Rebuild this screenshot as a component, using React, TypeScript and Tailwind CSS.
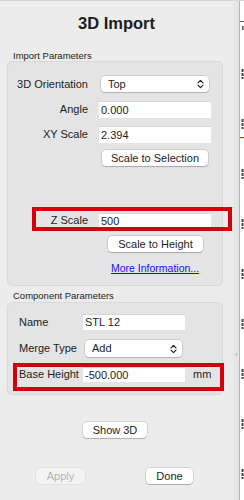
import React from "react";

function Chevrons() {
  return (
    <svg width="7" height="10" viewBox="0 0 7 10" fill="none" stroke="#222" strokeWidth="1.2" strokeLinecap="round" strokeLinejoin="round">
      <path d="M1 3.8 L3.5 1.3 L6 3.8" />
      <path d="M1 6.2 L3.5 8.7 L6 6.2" />
    </svg>
  );
}

function Select({ value, className }: { value: string; className: string }) {
  return (
    <div
      className={`flex items-center justify-between rounded-[4px] bg-white pl-[7px] pr-[5px] text-[11px] shadow-[0_0_0_0.5px_rgba(0,0,0,0.18),0_1px_1px_rgba(0,0,0,0.15)] ${className}`}
    >
      <span>{value}</span>
      <Chevrons />
    </div>
  );
}

function Field({ value, className }: { value: string; className: string }) {
  return (
    <div className={`flex items-center bg-white pl-[2px] text-[11px] border-t border-[#d6d6d6] ${className}`}>
      {value}
    </div>
  );
}

function Button({ label, className, disabled }: { label: string; className: string; disabled?: boolean }) {
  return (
    <div
      className={`flex items-center justify-center rounded-[4px] text-[11px] ${
        disabled
          ? "bg-[#f3f3f3] text-[#b3b3b3] shadow-[0_0_0_0.5px_rgba(0,0,0,0.1)]"
          : "bg-white text-[#1d1d1d] shadow-[0_0_0_0.5px_rgba(0,0,0,0.2),0_1px_1px_rgba(0,0,0,0.18)]"
      } ${className}`}
    >
      {label}
    </div>
  );
}

export default function App() {
  const ticks = [68, 118, 168, 218, 268, 318, 368, 418, 468];

  return (
    <div className="flex h-[500px] w-[244px] overflow-hidden bg-[#ececec] font-['Liberation_Sans',Arial,sans-serif] text-[#1d1d1d]">
      {/* Dialog panel */}
      <div className="flex w-[233px] flex-col border-t border-[#d6d6d6]">
        <div className="flex h-[45px] items-center justify-center text-[16.5px] font-bold">3D Import</div>

        <div className="mt-[5px] h-[10px] pl-[13px] text-[9.5px] leading-[10px]">Import Parameters</div>
        <div className="ml-[7px] flex h-[225px] w-[216px] flex-col rounded-[5px] border border-[#d9d9d9] bg-[#e4e4e4]">
          <div className="mt-[14px] flex h-[16px] items-center">
            <div className="w-[80px] text-right text-[11px]">3D Orientation</div>
            <Select value="Top" className="ml-[13px] h-[16px] w-[108px]" />
          </div>
          <div className="mt-[9px] flex h-[17px] items-center">
            <div className="w-[80px] text-right text-[11px]">Angle</div>
            <Field value="0.000" className="ml-[11px] h-[17px] w-[112px]" />
          </div>
          <div className="mt-[8px] flex h-[17px] items-center">
            <div className="w-[80px] text-right text-[11px]">XY Scale</div>
            <Field value="2.394" className="ml-[11px] h-[17px] w-[112px]" />
          </div>
          <Button label="Scale to Selection" className="ml-[94px] mt-[7px] h-[16px] w-[106px]" />

          <div className="relative mt-[47px] flex h-[15px] items-center">
            <div className="w-[80px] text-right text-[11px]">Z Scale</div>
            <Field value="500" className="ml-[11px] h-[15px] w-[112px]" />
            <div className="absolute left-[24px] top-[-6px] h-[24px] w-[200px] border-[4px] border-[#d6000d]" />
          </div>
          <Button label="Scale to Height" className="ml-[100px] mt-[8px] h-[16px] w-[95px]" />
          <div className="ml-[103px] mt-[10px] h-[12px] text-[10.5px] leading-[12px] text-[#1a0dff] underline">
            More Information...
          </div>
        </div>

        <div className="mt-[5px] h-[10px] pl-[13px] text-[9.5px] leading-[10px]">Component Parameters</div>
        <div className="ml-[7px] mt-[1px] flex h-[93px] w-[216px] flex-col rounded-[5px] border border-[#d9d9d9] bg-[#e4e4e4]">
          <div className="mt-[11px] flex h-[16px] items-center">
            <div className="w-[75px] pl-[11px] text-[11px]">Name</div>
            <Field value="STL 12" className="h-[16px] w-[102px]" />
          </div>
          <div className="mt-[10px] flex h-[17px] items-center">
            <div className="w-[77px] pl-[11px] text-[11px]">Merge Type</div>
            <Select value="Add" className="h-[17px] w-[97px]" />
          </div>
          <div className="relative mt-[10px] flex h-[15px] items-center">
            <div className="w-[75px] pl-[11px] text-[11px]">Base Height</div>
            <Field value="-500.000" className="h-[15px] w-[102px]" />
            <div className="ml-[8px] text-[11px]">mm</div>
            <div className="absolute left-[5px] top-[-4px] h-[28px] w-[211px] border-[4px] border-[#d6000d]" />
          </div>
        </div>

        <Button label="Show 3D" className="ml-[83px] mt-[27px] h-[16px] w-[64px]" />

        <div className="mt-[30px] flex h-[16px]">
          <Button label="Apply" disabled className="ml-[36px] h-[16px] w-[49px]" />
          <Button label="Done" className="ml-[61px] h-[16px] w-[47px]" />
        </div>
      </div>

      {/* Window edge and ruler strip */}
      <div className="flex h-[500px] w-[11px] border-t border-[#d6d6d6]">
        <div className="relative w-[6px] bg-[#e6e6e6]">
          <div className="absolute left-[2px] top-[352px] h-[3px] w-[3px] rounded-full bg-[#c8c8c8]" />
        </div>
        <div className="w-[1px] bg-[#b4b4b4]" />
        <div className="w-[4px] bg-white">
          <svg width="4" height="500" viewBox="0 0 4 500">
            <rect x="0" y="20" width="4" height="1" fill="#555" />
            <rect x="2" y="25" width="1.5" height="4" fill="#555" />
            <rect x="0" y="136" width="4" height="1.2" fill="#e02020" />
            {ticks.map((t) => (
              <g key={t} fill="#444">
                <rect x="1.5" y={t} width="2" height="3" />
                <rect x="1.5" y={t + 4} width="2" height="3" />
                <rect x="1.5" y={t + 8} width="2" height="2" />
              </g>
            ))}
          </svg>
        </div>
      </div>
    </div>
  );
}
